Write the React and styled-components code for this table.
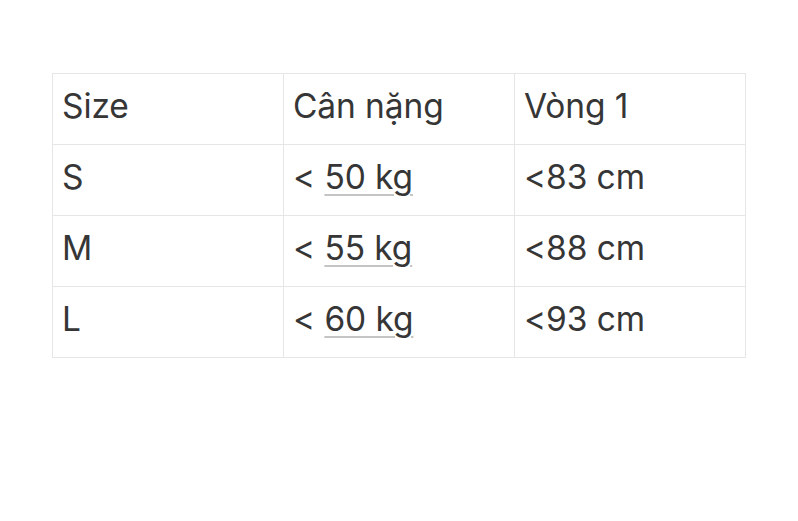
import React from "react";
import styled, { createGlobalStyle } from "styled-components";

const Global = createGlobalStyle`
  html, body { margin: 0; padding: 0; background: #ffffff; }
  body { font-family: Inter, "Noto Sans", sans-serif; }
`;

const Page = styled.div`
  padding: 73px 0 0 52px;
`;

const Table = styled.table`
  border-collapse: collapse;
  width: 694px;
  table-layout: fixed;
`;

const Cell = styled.td`
  border: 1px solid #e6e6e6;
  height: 71px;
  padding: 0 0 6px 9px;
  box-sizing: border-box;
  font-size: 33.5px;
  color: #363636;
  letter-spacing: -0.1px;
  vertical-align: middle;
  white-space: nowrap;
`;

const Detected = styled.span`
  text-decoration: underline;
  text-decoration-color: #c4c4c4;
  text-decoration-thickness: 2px;
  text-underline-offset: 5px;
  text-decoration-skip-ink: auto;
`;

const rows = [
  ["Size", "Cân nặng", "Vòng 1", false],
  ["S", "50 kg", "<83 cm", true],
  ["M", "55 kg", "<88 cm", true],
  ["L", "60 kg", "<93 cm", true],
];

export default function App() {
  return (
    <Page>
      <Global />
      <Table>
        <tbody>
          {rows.map(([a, b, c, w]) => (
            <tr key={a}>
              <Cell>{a}</Cell>
              <Cell>
                {w ? (
                  <>
                    {"< "}
                    <Detected>{b}</Detected>
                  </>
                ) : (
                  b
                )}
              </Cell>
              <Cell>{c}</Cell>
            </tr>
          ))}
        </tbody>
      </Table>
    </Page>
  );
}
